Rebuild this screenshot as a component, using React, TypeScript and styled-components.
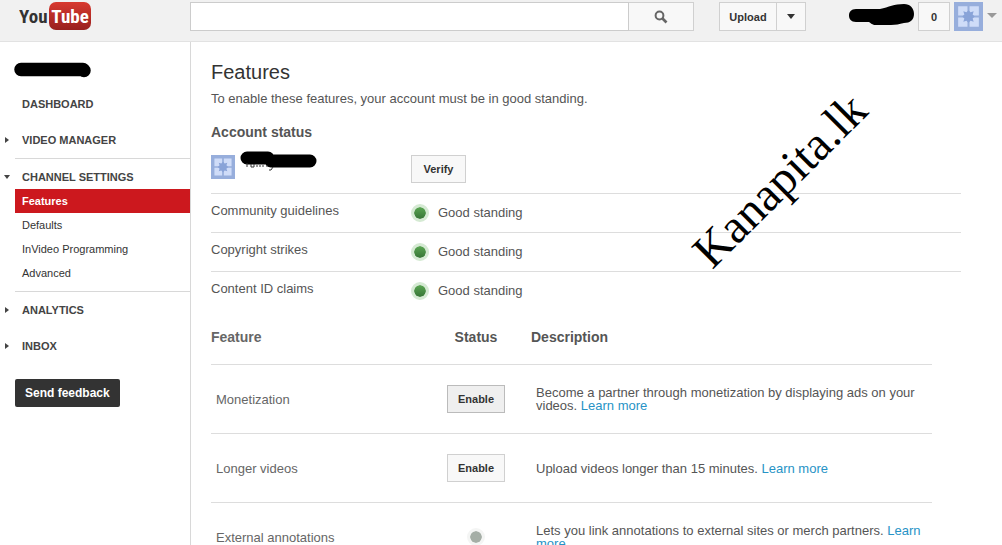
import React from "react";
import styled, { createGlobalStyle, css } from "styled-components";

const GlobalStyle = createGlobalStyle`
  * { box-sizing: border-box; }
  body {
    margin: 0;
    background: #fff;
    color: #555;
    font: 13px/16px "Liberation Sans", Arial, sans-serif;
  }
`;

const Header = styled.header`
  display: flex;
  align-items: flex-start;
  height: 42px;
  padding: 2px 5px 0 19px;
  background: #f1f1f1;
  border-bottom: 1px solid #e2e2e2;
`;

const LogoLink = styled.a`
  display: block;
  width: 171px;
  flex: none;
  svg { display: block; }
`;

const control = css`
  height: 29px;
  border: 1px solid #d0d0d0;
  background: #f8f8f8;
  color: #333;
  font: bold 11px/16px "Liberation Sans", Arial, sans-serif;
`;

const SearchForm = styled.form`
  display: flex;
  flex: 1;
  min-width: 120px;
`;

const SearchInput = styled.input`
  flex: 1;
  min-width: 0;
  height: 29px;
  padding: 0 8px;
  border: 1px solid #ccc;
  background: #fff;
  font: 13px "Liberation Sans", Arial, sans-serif;
`;

const SearchButton = styled.button`
  ${control}
  width: 65px;
  padding: 0;
  border-left: 0;
  svg { display: block; margin: 0 auto; }
`;

const UploadGroup = styled.div`
  display: flex;
  margin: 0 43px 0 25px;
`;

const BarButton = styled.button<{ $width: number; $joined?: boolean }>`
  ${control}
  display: flex;
  align-items: center;
  justify-content: center;
  width: ${(p) => p.$width}px;
  padding: 0;
  ${(p) => p.$joined && "border-left: 0;"}
`;

const UserGroup = styled.div`
  display: flex;
  gap: 4px;
`;

const MenuButton = styled.button`
  display: flex;
  align-items: center;
  height: 27px;
  padding: 0;
  border: 0;
  background: none;
`;

const Page = styled.div`
  display: flex;
`;

const Sidebar = styled.nav`
  flex: none;
  width: 191px;
  padding-top: 20px;
  border-right: 1px solid #d8d8d8;
`;

const ChannelName = styled.div`
  height: 24px;
  padding-left: 14px;
  svg { display: block; }
`;

const SectionLink = styled.a<{ $open?: boolean }>`
  display: flex;
  align-items: center;
  gap: 12px;
  padding: 9px 0 ${(p) => (p.$open ? 3 : 9)}px 4px;
  color: #444;
  font-size: 11px;
  font-weight: bold;
  line-height: 18px;
  text-decoration: none;
`;

const SubList = styled.ul`
  margin: 0 0 6px 15px;
  padding: 0;
  list-style: none;
`;

const SubLink = styled.a<{ $active?: boolean }>`
  display: block;
  padding-left: 7px;
  background: ${(p) => (p.$active ? "#cc181e" : "transparent")};
  color: ${(p) => (p.$active ? "#fff" : "#333")};
  font-size: 11px;
  font-weight: ${(p) => (p.$active ? "bold" : "normal")};
  line-height: 24px;
  text-decoration: none;
`;

const Divider = styled.hr`
  height: 1px;
  margin: 0 0 0 15px;
  border: 0;
  background: #d8d8d8;
`;

const FeedbackButton = styled.button`
  height: 28px;
  margin: 15px 0 0 15px;
  padding: 0 10px;
  border: 0;
  border-radius: 2px;
  background: #333;
  color: #fff;
  font: bold 12px/16px "Liberation Sans", Arial, sans-serif;
`;

const Main = styled.main`
  position: relative;
  flex: 1;
  min-width: 0;
  padding: 18px 41px 0 20px;
`;

const Title = styled.h1`
  margin: 0;
  color: #333;
  font-size: 20px;
  font-weight: normal;
  line-height: 24px;
`;

const Intro = styled.p`
  margin: 7px 0 17px;
`;

const SectionTitle = styled.h2`
  margin: 0;
  font-size: 14px;
  line-height: 16px;
`;

const AccountTable = styled.table`
  width: 100%;
  margin-top: 4px;
  border-spacing: 0;
  table-layout: fixed;
  th, td { padding: 0; text-align: left; font-weight: normal; }
  th { width: 200px; vertical-align: top; }
`;

const AccountRow = styled.tr<{ $tall?: boolean }>`
  height: ${(p) => (p.$tall ? 50 : 39)}px;
  > * { border-bottom: 1px solid #ddd; }
  > th { padding-top: ${(p) => (p.$tall ? 7 : 9)}px; }
  &:last-child > * { border-color: transparent; }
`;

const Owner = styled.div`
  display: flex;
  gap: 5px;
  svg { display: block; }
  svg:first-child { margin-top: 4px; }
`;

const ActionButton = styled.button<{ $pressed?: boolean }>`
  ${control}
  height: 28px;
  padding: 0 9px;
  min-width: 55px;
  ${(p) => p.$pressed && "background: #efefef; border-color: #bbb;"}
`;

const Standing = styled.span`
  display: flex;
  align-items: center;
  gap: 9px;
`;

const Dot = styled.span<{ $off?: boolean }>`
  display: inline-block;
  width: 18px;
  height: 18px;
  border: 3px solid ${(p) => (p.$off ? "#f4f5f4" : "#d5ead3")};
  border-radius: 50%;
  background: ${(p) => (p.$off ? "#a5aea6" : "linear-gradient(#5aa552, #377537)")};
  background-clip: padding-box;
  vertical-align: middle;
`;

const FeatureTable = styled.table`
  width: calc(100% - 29px);
  border-spacing: 0;
  table-layout: fixed;
  th, td { border-bottom: 1px solid #ddd; text-align: left; }
  th { height: 54px; padding: 0 0 2px; font-size: 14px; }
  td { height: 69px; padding: 0 5px; line-height: 13px; }
  th:nth-child(1) { width: 210px; color: #666; }
  th:nth-child(2) { width: 110px; }
  th:nth-child(2), td:nth-child(2) { text-align: center; }
  td:nth-child(1) { color: #666; }
  td > button { min-width: 58px; }
`;

const LearnLink = styled.a`
  color: #2793c6;
  text-decoration: none;
`;

const Watermark = styled.div`
  position: absolute;
  top: 186px;
  left: 527px;
  color: #000;
  font: 48px/48px "Liberation Serif", "Times New Roman", serif;
  transform: rotate(-45deg);
  transform-origin: 0 100%;
  pointer-events: none;
`;

const Logo = () => (
  <svg width="73" height="29" viewBox="0 0 73 29" role="img" aria-label="YouTube">
    <defs>
      <linearGradient id="tube" x1="0" y1="0" x2="0" y2="1">
        <stop offset="0" stopColor="#d8392f" />
        <stop offset="1" stopColor="#98201f" />
      </linearGradient>
    </defs>
    <rect x="30" y="0" width="42" height="28" rx="7" fill="url(#tube)" />
    <g fontFamily="'Liberation Sans Narrow', 'Roboto Condensed', 'Liberation Sans', sans-serif" fontSize="19">
      <text x="0" y="21" fill="#333" fontWeight="bold">You</text>
      <text x="51" y="21" fill="#fff" fontWeight="bold" textAnchor="middle">Tube</text>
    </g>
  </svg>
);

const Avatar = ({ size }: { size: number }) => (
  <svg width={size} height={size} viewBox="0 0 28 28" aria-hidden="true">
    <rect width="28" height="28" fill="#97aedc" />
    <path d="M4 4h9v9H4zM15 4h9v9h-9zM4 15h9v9H4zM15 15h9v9h-9z" fill="#cfdcf8" />
    <path d="M9 9l3 1 2-2 2 2 3-1-1 3 2 2-2 2 1 3-3-1-2 2-2-2-3 1 1-3-2-2 2-2z" fill="#89a3d8" />
  </svg>
);

const Caret = ({ color, width }: { color: string; width: number }) => (
  <svg width={width} height="5" viewBox="0 0 10 5" preserveAspectRatio="none" aria-hidden="true">
    <path d="M0 0h10L5 5z" fill={color} />
  </svg>
);

const SectionArrow = ({ kind }: { kind: "none" | "right" | "down" }) => (
  <svg width="6" height="6" viewBox="0 0 6 6" aria-hidden="true">
    {kind === "right" && <path d="M1 0L5 3 1 6z" fill="#444" />}
    {kind === "down" && <path d="M0 1h6L3 5z" fill="#444" />}
  </svg>
);

const standings = ["Community guidelines", "Copyright strikes", "Content ID claims"];

const features = [
  { name: "Monetization", text: "Become a partner through monetization by displaying ads on your videos.", enable: true, pressed: true },
  { name: "Longer videos", text: "Upload videos longer than 15 minutes.", enable: true },
  { name: "External annotations", text: "Lets you link annotations to external sites or merch partners.", enable: false },
];

export default function App() {
  return (
    <>
      <GlobalStyle />
      <Header>
        <LogoLink href="#"><Logo /></LogoLink>
        <SearchForm>
          <SearchInput type="text" aria-label="Search" />
          <SearchButton type="button" aria-label="Search">
            <svg width="14" height="14" viewBox="0 0 14 14" fill="none" stroke="#666">
              <circle cx="5.500" cy="5.500" r="3.900" strokeWidth="2" />
              <path d="M8.500 8.500L12.500 12.500" strokeWidth="2.600" />
            </svg>
          </SearchButton>
        </SearchForm>
        <UploadGroup>
          <BarButton $width={58}>Upload</BarButton>
          <BarButton $width={29} $joined aria-label="Upload options"><Caret color="#333" width={8} /></BarButton>
        </UploadGroup>
        <UserGroup>
          <svg width="65" height="29" viewBox="0 0 65 29" aria-hidden="true">
            <path d="M7 7H31C40 5 45 2 55 2C61 2 65 6 65 12C65 18 61 21 55 21C50 22 47 23 42 23H27C23 23 22 21 20 20H7C2 20 0 17 0 13.500S2 7 7 7z" />
          </svg>
          <BarButton $width={32} aria-label="Notifications">0</BarButton>
          <Avatar size={29} />
          <MenuButton aria-label="Account menu"><Caret color="#999" width={10} /></MenuButton>
        </UserGroup>
      </Header>
      <Page>
        <Sidebar>
          <ChannelName>
            <svg width="78" height="16" viewBox="0 0 78 16" aria-hidden="true">
              <path d="M7 7.500H69L70 8.500" fill="none" stroke="#000" strokeWidth="13.500" strokeLinecap="round" strokeLinejoin="round" />
            </svg>
          </ChannelName>
          <SectionLink href="#"><SectionArrow kind="none" />DASHBOARD</SectionLink>
          <SectionLink href="#"><SectionArrow kind="right" />VIDEO MANAGER</SectionLink>
          <Divider />
          <SectionLink href="#" $open><SectionArrow kind="down" />CHANNEL SETTINGS</SectionLink>
          <SubList>
            <li><SubLink href="#" $active>Features</SubLink></li>
            <li><SubLink href="#">Defaults</SubLink></li>
            <li><SubLink href="#">InVideo Programming</SubLink></li>
            <li><SubLink href="#">Advanced</SubLink></li>
          </SubList>
          <Divider />
          <SectionLink href="#"><SectionArrow kind="right" />ANALYTICS</SectionLink>
          <SectionLink href="#"><SectionArrow kind="right" />INBOX</SectionLink>
          <FeedbackButton>Send feedback</FeedbackButton>
        </Sidebar>
        <Main>
          <Title>Features</Title>
          <Intro>To enable these features, your account must be in good standing.</Intro>
          <SectionTitle>Account status</SectionTitle>
          <AccountTable>
            <tbody>
              <AccountRow $tall>
                <th scope="row">
                  <Owner>
                    <Avatar size={24} />
                    <svg width="77" height="22" viewBox="0 0 77 22" aria-hidden="true">
                      <path d="M7 7H28M31 10H70" fill="none" stroke="#000" strokeWidth="13" strokeLinecap="round" />
                      <path d="M7 12v4M11 13v3h3v-3M17 16v-2M20 16v-2M23 16v-2M27 16v-2M33 16l-2 3h-2" fill="none" stroke="#333" />
                    </svg>
                  </Owner>
                </th>
                <td><ActionButton>Verify</ActionButton></td>
              </AccountRow>
              {standings.map((label) => (
                <AccountRow key={label}>
                  <th scope="row">{label}</th>
                  <td><Standing><Dot />Good standing</Standing></td>
                </AccountRow>
              ))}
            </tbody>
          </AccountTable>
          <FeatureTable>
            <thead>
              <tr><th scope="col">Feature</th><th scope="col">Status</th><th scope="col">Description</th></tr>
            </thead>
            <tbody>
              {features.map((f) => (
                <tr key={f.name}>
                  <td>{f.name}</td>
                  <td>{f.enable ? <ActionButton $pressed={f.pressed}>Enable</ActionButton> : <Dot $off />}</td>
                  <td>{f.text} <LearnLink href="#">Learn more</LearnLink></td>
                </tr>
              ))}
            </tbody>
          </FeatureTable>
          <Watermark>Kanapita.lk</Watermark>
        </Main>
      </Page>
    </>
  );
}
